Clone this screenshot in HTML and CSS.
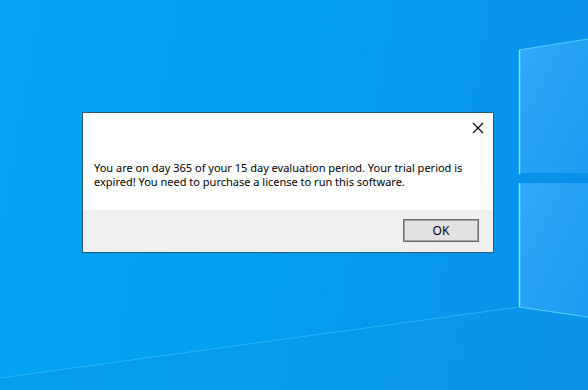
FILE: index.html
```html
<!DOCTYPE html>
<html lang="en">
<head>
    <meta charset="UTF-8">
    <title>Evaluation expired</title>
    <link rel="stylesheet" href="styles.css">
</head>
<body>
    <div class="desktop">
        <svg class="wallpaper" width="588" height="390" viewBox="0 0 588 390">
            <defs>
                <linearGradient id="pane" x1="0" y1="0" x2="1" y2="1">
                    <stop offset="0" stop-color="#2fa9f6"/>
                    <stop offset="1" stop-color="#1e9bf2"/>
                </linearGradient>
            </defs>
            <polygon points="0,378 519,307 588,317 588,390 0,390" fill="#0a97ea" opacity="0.5"/>
            <line x1="0" y1="378" x2="519" y2="307" stroke="#3fc4ff" stroke-width="1" opacity="0.6"/>
            <polygon points="519,50 588,39 588,173 519,173" fill="url(#pane)"/>
            <polygon points="519,183 588,183 588,317 519,307" fill="url(#pane)"/>
            <line x1="519.5" y1="50" x2="519.5" y2="174" stroke="#5ef0ff" stroke-width="1.5"/>
            <line x1="519.5" y1="183" x2="519.5" y2="307" stroke="#5ef0ff" stroke-width="1.5"/>
            <line x1="519" y1="50" x2="588" y2="39" stroke="#4fd4ff" stroke-width="1"/>
            <line x1="519" y1="307" x2="588" y2="317" stroke="#4fd4ff" stroke-width="1"/>
        </svg>

        <div class="dialog">
            <div class="dialog-body">
                <div class="titlebar">
                    <span class="close">
                        <svg width="12" height="12" viewBox="0 0 12 12">
                            <path d="M1 1 L11 11 M11 1 L1 11" stroke="#000" stroke-width="1.1" fill="none"/>
                        </svg>
                    </span>
                </div>
                <p class="message">You are on day 365 of your 15 day evaluation period. Your trial period is<br>expired! You need to purchase a license to run this software.</p>
            </div>
            <div class="dialog-footer">
                <button class="btn">OK</button>
            </div>
        </div>
    </div>
</body>
</html>
```

FILE: styles.css
```css
* {
    margin: 0;
    padding: 0;
    box-sizing: border-box;
}

body {
    width: 588px;
    height: 390px;
    overflow: hidden;
    font-family: 'Noto Sans', 'Segoe UI', Tahoma, sans-serif;
}

.desktop {
    position: relative;
    width: 588px;
    height: 390px;
    background: linear-gradient(100deg, #04a3f3 0%, #039ff1 45%, #0a8fe8 100%);
}

.wallpaper {
    position: absolute;
    left: 0;
    top: 0;
}

.dialog {
    position: absolute;
    left: 82px;
    top: 112px;
    width: 412px;
    height: 141px;
    border: 1px solid #24597c;
    background: #f0f0f0;
    display: flex;
    flex-direction: column;
}

.dialog-body {
    background: #fff;
    height: 97px;
}

.titlebar {
    height: 30px;
    display: flex;
    justify-content: flex-end;
    align-items: center;
    padding-right: 9px;
}

.close {
    width: 12px;
    height: 12px;
    display: flex;
}

.message {
    padding: 18px 0 0 11px;
    font-size: 11px;
    line-height: 14px;
    color: #000;
}

.dialog-footer {
    flex: 1;
    display: flex;
    justify-content: flex-end;
    padding: 9px 14px 0 0;
}

.btn {
    width: 76px;
    height: 23px;
    background: #e1e1e1;
    border: 1px solid #6b6b6b;
    box-shadow: inset 0 0 0 1px #a3a3a3;
    font-family: inherit;
    font-size: 12px;
    color: #000;
}
```
